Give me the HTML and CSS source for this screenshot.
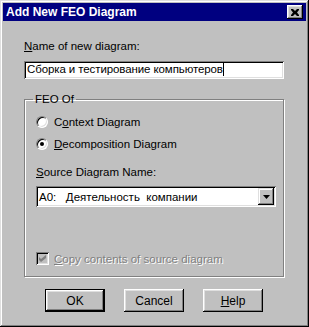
FILE: index.html
```html
<!DOCTYPE html>
<html lang="en">
<head>
  <meta charset="UTF-8">
  <title>Add New FEO Diagram</title>
  <link rel="stylesheet" href="styles.css">
</head>
<body>
  <div class="window">
    <div class="titlebar">
      <span class="title">Add New FEO Diagram</span>
      <button class="close-btn">
        <svg width="8" height="7" viewBox="0 0 8 7"><path d="M0 0h2l2 2 2-2h2v1L6 3.5 8 6v1H6L4 5 2 7H0V6l2-2.5L0 1z" fill="#000"/></svg>
      </button>
    </div>

    <div class="content">
      <label class="field-label"><u>N</u>ame of new diagram:</label>
      <div class="textbox">Сборка и тестирование компьютеров<span class="caret"></span></div>

      <fieldset class="group">
        <legend>FEO Of</legend>
        <div class="radio-row">
          <span class="radio"></span>
          <span>C<u>o</u>ntext Diagram</span>
        </div>
        <div class="radio-row">
          <span class="radio checked"></span>
          <span><u>D</u>ecomposition Diagram</span>
        </div>
        <div class="source-label"><u>S</u>ource Diagram Name:</div>
        <div class="combo">
          <span class="combo-text">A0:&nbsp;&nbsp;&nbsp;Деятельность&nbsp;&nbsp;компании</span>
          <span class="combo-btn">
            <svg width="7" height="4" viewBox="0 0 7 4"><path d="M0 0h7L3.5 4z" fill="#000"/></svg>
          </span>
        </div>
        <div class="check-row disabled">
          <span class="checkbox">
            <svg width="7" height="7" viewBox="0 0 7 7"><path d="M0 2l2 2 5-4v3l-5 4-2-2z" fill="#808080"/></svg>
          </span>
          <span class="disabled-text"><u>C</u>opy contents of source diagram</span>
        </div>
      </fieldset>

      <div class="buttons">
        <button class="btn default">OK</button>
        <button class="btn">Cancel</button>
        <button class="btn"><u>H</u>elp</button>
      </div>
    </div>
  </div>
</body>
</html>
```

FILE: styles.css
```css
body {
  margin: 0;
  background-color: #c0c0c0;
  font-family: 'Liberation Sans', Arial, sans-serif;
  font-size: 11.5px;
  color: #000;
}

.window {
  width: 309px;
  height: 327px;
  box-sizing: border-box;
  padding: 3px;
  background-color: #c0c0c0;
  box-shadow: inset -1px -1px #000, inset 1px 1px #dfdfdf,
              inset -2px -2px #808080, inset 2px 2px #fff;
}

.titlebar {
  height: 18px;
  background-color: #000080;
  display: flex;
  align-items: center;
  justify-content: space-between;
  padding: 0 3px 0 3px;
}

.title {
  color: #fff;
  font-weight: bold;
  font-size: 12px;
}

.close-btn {
  width: 16px;
  height: 14px;
  padding: 0;
  border: none;
  background-color: #c0c0c0;
  display: flex;
  align-items: center;
  justify-content: center;
  box-shadow: inset -1px -1px #000, inset 1px 1px #fff,
              inset -2px -2px #808080, inset 2px 2px #dfdfdf;
}

.content {
  padding: 19px 0 0 21px;
}

.field-label {
  display: block;
  line-height: 13px;
}

.textbox {
  margin-top: 8px;
  width: 260px;
  height: 18px;
  box-sizing: border-box;
  background-color: #fff;
  padding: 2px 0 0 3px;
  line-height: 13px;
  white-space: nowrap;
  letter-spacing: -0.1px;
  box-shadow: inset 1px 1px #808080, inset -1px -1px #fff,
              inset 2px 2px #000, inset -2px -2px #dfdfdf;
}

.caret {
  display: inline-block;
  width: 1px;
  height: 13px;
  background-color: #000;
  vertical-align: top;
}

.group {
  margin: 14px 0 0 0;
  width: 260px;
  height: 184px;
  box-sizing: border-box;
  padding: 9px 0 0 11px;
  border: 1px solid #808080;
  box-shadow: inset 1px 1px #fff, 1px 1px #fff;
}

.group legend {
  padding: 0 2px;
  margin-left: -3px;
  line-height: 13px;
}

.radio-row {
  display: flex;
  align-items: center;
  gap: 6px;
  height: 13px;
  margin-bottom: 9px;
}

.radio {
  width: 12px;
  height: 12px;
  border-radius: 50%;
  background-color: #fff;
  box-sizing: border-box;
  border: 1px solid;
  border-color: #808080 #fff #fff #808080;
  box-shadow: inset 1px 1px #000, inset -1px -1px #dfdfdf;
  position: relative;
}

.radio.checked::after {
  content: '';
  position: absolute;
  left: 3px;
  top: 3px;
  width: 4px;
  height: 4px;
  border-radius: 50%;
  background-color: #000;
}

.source-label {
  margin-top: 16px;
  line-height: 13px;
}

.combo {
  margin-top: 7px;
  width: 240px;
  height: 21px;
  box-sizing: border-box;
  background-color: #fff;
  display: flex;
  align-items: center;
  justify-content: space-between;
  padding: 2px;
  box-shadow: inset 1px 1px #808080, inset -1px -1px #fff,
              inset 2px 2px #000, inset -2px -2px #dfdfdf;
}

.combo-text {
  padding-left: 1px;
}

.combo-btn {
  width: 16px;
  height: 17px;
  background-color: #c0c0c0;
  display: flex;
  align-items: center;
  justify-content: center;
  box-shadow: inset -1px -1px #000, inset 1px 1px #dfdfdf,
              inset -2px -2px #808080, inset 2px 2px #fff;
}

.check-row {
  display: flex;
  align-items: center;
  gap: 5px;
  margin-top: 45px;
}

.checkbox {
  width: 13px;
  height: 13px;
  box-sizing: border-box;
  background-color: #c0c0c0;
  display: flex;
  align-items: center;
  justify-content: center;
  box-shadow: inset 1px 1px #808080, inset -1px -1px #fff,
              inset 2px 2px #000, inset -2px -2px #dfdfdf;
}

.disabled-text {
  color: #808080;
  text-shadow: 1px 1px #fff;
}

.buttons {
  display: flex;
  gap: 19px;
  margin: 12px 0 0 21px;
}

.btn {
  width: 60px;
  height: 23px;
  padding: 0;
  border: none;
  background-color: #c0c0c0;
  font-family: 'Liberation Sans', Arial, sans-serif;
  font-size: 12px;
  color: #000;
  box-shadow: inset -1px -1px #000, inset 1px 1px #fff,
              inset -2px -2px #808080, inset 2px 2px #dfdfdf;
}

.btn.default {
  box-shadow: inset 0 0 0 1px #000, inset -2px -2px #000, inset 2px 2px #fff,
              inset -3px -3px #808080, inset 3px 3px #dfdfdf;
}
```
